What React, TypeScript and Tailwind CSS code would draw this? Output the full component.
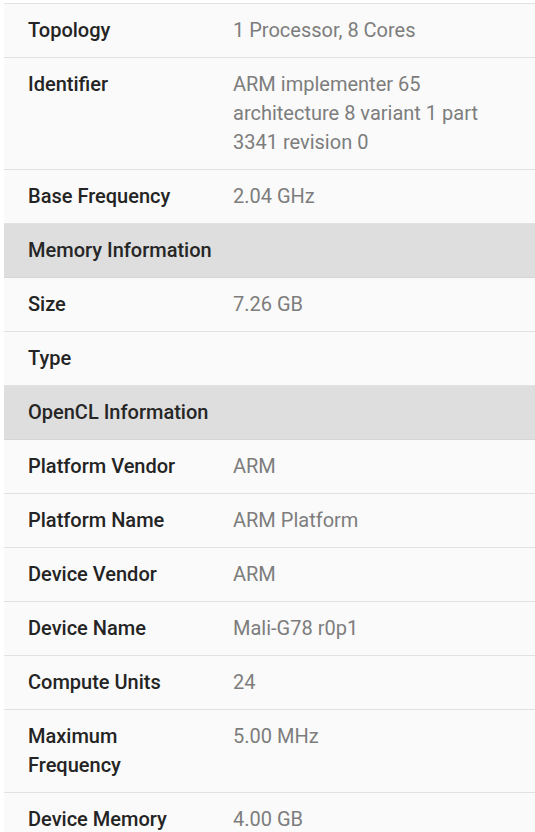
import React from 'react';

type Row =
  | { kind: 'header'; title: string }
  | { kind: 'item'; label: string; value?: string[] };

// rows of the system information list
const rows: Row[] = [
  { kind: 'item', label: 'Topology', value: ['1 Processor, 8 Cores'] },
  {
    kind: 'item',
    label: 'Identifier',
    value: ['ARM implementer 65', 'architecture 8 variant 1 part', '3341 revision 0'],
  },
  { kind: 'item', label: 'Base Frequency', value: ['2.04 GHz'] },
  { kind: 'header', title: 'Memory Information' },
  { kind: 'item', label: 'Size', value: ['7.26 GB'] },
  { kind: 'item', label: 'Type' },
  { kind: 'header', title: 'OpenCL Information' },
  { kind: 'item', label: 'Platform Vendor', value: ['ARM'] },
  { kind: 'item', label: 'Platform Name', value: ['ARM Platform'] },
  { kind: 'item', label: 'Device Vendor', value: ['ARM'] },
  { kind: 'item', label: 'Device Name', value: ['Mali-G78 r0p1'] },
  { kind: 'item', label: 'Compute Units', value: ['24'] },
  { kind: 'item', label: 'Maximum Frequency', value: ['5.00 MHz'] },
  { kind: 'item', label: 'Device Memory', value: ['4.00 GB'] },
];

export default function App() {
  return (
    <div
      className="w-[535px] h-[832px] overflow-hidden bg-white pt-[3px] pl-1"
      style={{ fontFamily: 'Roboto, "Noto Sans", sans-serif' }}
    >
      <div className="bg-[#fafafa] border-t border-[#e2e2e2]">
        {rows.map((row, i) =>
          row.kind === 'header' ? (
            <div
              key={i}
              className="bg-[#dedede] border-b border-[#d6d6d6] pl-6 py-3 text-[20px] leading-[29px] font-medium text-[#262626]"
            >
              {row.title}
            </div>
          ) : (
            <div key={i} className="flex border-b border-[#e2e2e2] py-3 text-[20px] leading-[29px]">
              <div className="w-[229px] shrink-0 pl-6 pr-8 font-medium text-[#242424]">{row.label}</div>
              <div className="flex-1 pr-4 text-[#7d7d7d]">
                {row.value?.map((v) => (
                  <div key={v}>{v}</div>
                ))}
              </div>
            </div>
          ),
        )}
      </div>
    </div>
  );
}
